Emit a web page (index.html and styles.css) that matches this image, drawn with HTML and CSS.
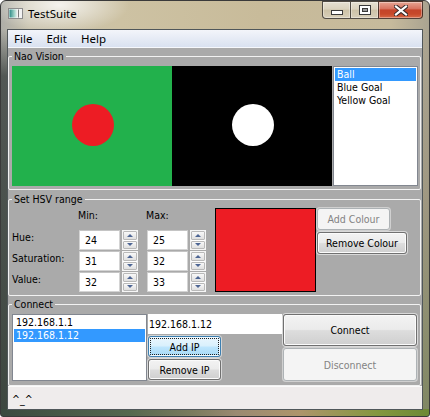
FILE: index.html
```html
<!DOCTYPE html>
<html>
<head>
<meta charset="utf-8">
<title>TestSuite</title>
<link rel="stylesheet" href="styles.css">
</head>
<body>
<div class="window">
  <div class="titlebar">
    <svg class="app-icon" width="15" height="11" viewBox="0 0 15 11">
      <defs>
        <linearGradient id="ig" x1="0" y1="0" x2="1" y2="0">
          <stop offset="0" stop-color="#2d8a86"/>
          <stop offset="0.6" stop-color="#9fd3c8"/>
          <stop offset="1" stop-color="#f4f4f4"/>
        </linearGradient>
      </defs>
      <rect x="0.5" y="0.5" width="14" height="10" fill="#f2f2f2" stroke="#8c8c8c"/>
      <rect x="1.5" y="1.5" width="8" height="8" fill="url(#ig)"/>
      <rect x="10" y="1.5" width="1" height="8" fill="#7a7a7a"/>
    </svg>
    <span class="title">TestSuite</span>
    <div class="caption">
      <div class="cap cap-min">
        <svg class="glyph glyph-min" width="12" height="5" viewBox="0 0 12 5"><rect x="0.5" y="0.5" width="11" height="4" fill="#fff" stroke="#3a3a3a"/></svg>
      </div>
      <div class="cap cap-max">
        <svg class="glyph" width="12" height="10" viewBox="0 0 12 10"><rect x="0.5" y="0.5" width="11" height="9" fill="#fff" stroke="#3a3a3a"/><rect x="3.5" y="3.5" width="5" height="3" fill="#9a9a9a" stroke="#3a3a3a"/></svg>
      </div>
      <div class="cap cap-close">
        <svg class="glyph" width="14" height="11" viewBox="0 0 14 11"><path d="M2 1.5 L12 9.5 M12 1.5 L2 9.5" stroke="#3a2a2a" stroke-width="4.2" stroke-linecap="square"/><path d="M2 1.5 L12 9.5 M12 1.5 L2 9.5" stroke="#fff" stroke-width="2.2" stroke-linecap="square"/></svg>
      </div>
    </div>
  </div>

  <div class="client">
    <div class="menubar">
      <span class="menu-item">File</span>
      <span class="menu-item">Edit</span>
      <span class="menu-item">Help</span>
    </div>

    <div class="main">
      <fieldset class="group group-vision">
        <legend>Nao Vision</legend>
        <div class="vision-row">
          <div class="cam cam-green"><div class="blob blob-red"></div></div>
          <div class="cam cam-black"><div class="blob blob-white"></div></div>
          <ul class="list vision-list">
            <li class="sel">Ball</li>
            <li>Blue Goal</li>
            <li>Yellow Goal</li>
          </ul>
        </div>
      </fieldset>

      <fieldset class="group group-hsv">
        <legend>Set HSV range</legend>
        <div class="hsv">
          <div class="hsv-grid">
            <div></div>
            <div class="col-head">Min:</div>
            <div class="col-head">Max:</div>

            <div class="row-label">Hue:</div>
            <div class="spin"><div class="spin-field">24</div><div class="spin-btns"><div class="spin-btn up"></div><div class="spin-btn down"></div></div></div>
            <div class="spin"><div class="spin-field">25</div><div class="spin-btns"><div class="spin-btn up"></div><div class="spin-btn down"></div></div></div>

            <div class="row-label">Saturation:</div>
            <div class="spin"><div class="spin-field">31</div><div class="spin-btns"><div class="spin-btn up"></div><div class="spin-btn down"></div></div></div>
            <div class="spin"><div class="spin-field">32</div><div class="spin-btns"><div class="spin-btn up"></div><div class="spin-btn down"></div></div></div>

            <div class="row-label">Value:</div>
            <div class="spin"><div class="spin-field">32</div><div class="spin-btns"><div class="spin-btn up"></div><div class="spin-btn down"></div></div></div>
            <div class="spin"><div class="spin-field">33</div><div class="spin-btns"><div class="spin-btn up"></div><div class="spin-btn down"></div></div></div>
          </div>
          <div class="swatch"></div>
          <div class="colour-btns">
            <div class="btn disabled btn-add-colour">Add Colour</div>
            <div class="btn btn-remove-colour">Remove Colour</div>
          </div>
        </div>
      </fieldset>

      <fieldset class="group group-connect">
        <legend>Connect</legend>
        <div class="connect">
          <ul class="list ip-list">
            <li>192.168.1.1</li>
            <li class="sel">192.168.1.12</li>
          </ul>
          <div class="ip-mid">
            <div class="ip-field">192.168.1.12</div>
            <div class="btn focus btn-ip">Add IP</div>
            <div class="btn btn-ip">Remove IP</div>
          </div>
          <div class="ip-right">
            <div class="btn btn-connect">Connect</div>
            <div class="btn disabled btn-disconnect">Disconnect</div>
          </div>
        </div>
      </fieldset>
    </div>

    <div class="status">^_^</div>
  </div>
</div>
</body>
</html>
```

FILE: styles.css
```css
* { box-sizing: border-box; }

html, body {
  margin: 0;
  padding: 0;
  background: #ffffff;
}

body {
  width: 430px;
  height: 417px;
  overflow: hidden;
  font-family: "DejaVu Sans Condensed", "DejaVu Sans", sans-serif;
  font-stretch: condensed;
  font-size: 10.5px;
  color: #000;
}

.window {
  width: 430px;
  height: 417px;
  border: 1px solid #3a3a3a;
  border-radius: 6px 6px 3px 3px;
  overflow: hidden;
  display: flex;
  flex-direction: column;
  background:
    linear-gradient(to right, #3b4a3f 0, #55684f 30%, #7c7b5e 45%, #9b8a72 55%, #ad956b 70%, #84973f 88%, #6c8935 100%) left bottom / 100% 7px no-repeat,
    linear-gradient(to bottom, rgba(180,180,178,0) 28px, rgba(72,78,76,0.9) 75px, rgba(55,65,58,0.95) 417px) left top / 7px 100% no-repeat,
    linear-gradient(to bottom, rgba(0,0,0,0) 28px, rgba(120,110,80,0.25) 200px, rgba(90,110,60,0.55) 417px) right top / 7px 100% no-repeat,
    radial-gradient(70px 28px at 58px 4px, rgba(255,255,255,0.8), rgba(255,255,255,0)),
    linear-gradient(to right, #aeaea8 0, #c9c3ae 28px, #cdc2a3 120px, #c8bb9a 260px, #c6ba9c 390px, #a8a290 430px);
}

/* ---------- title bar ---------- */
.titlebar {
  height: 28px;
  flex: none;
  display: flex;
  align-items: flex-start;
  padding: 0 6px 0 7px;
}

.app-icon {
  margin-top: 7px;
  flex: none;
}

.title {
  margin: 5px 0 0 5px;
  font-family: "Noto Sans", "Open Sans", sans-serif;
  font-stretch: normal;
  font-size: 11.5px;
  line-height: 16px;
  color: #000;
}

.caption {
  margin-left: auto;
  display: flex;
  height: 18px;
}

.cap {
  height: 18px;
  border: 1px solid rgba(45, 40, 35, 0.8);
  display: flex;
  align-items: center;
  justify-content: center;
  box-shadow: inset 0 0 0 1px rgba(255, 255, 255, 0.35);
}

.cap-min {
  width: 28px;
  border-right: none;
  border-radius: 0 0 0 4px;
  background: linear-gradient(rgba(255,255,255,0.55) 0%, rgba(255,255,255,0.35) 45%, rgba(255,255,255,0.12) 50%, rgba(255,255,255,0.3) 100%);
}

.cap-max {
  width: 28px;
  border-right: none;
  background: linear-gradient(rgba(255,255,255,0.55) 0%, rgba(255,255,255,0.35) 45%, rgba(255,255,255,0.12) 50%, rgba(255,255,255,0.3) 100%);
}

.cap-close {
  width: 45px;
  border-radius: 0 0 4px 0;
  background: linear-gradient(#e6a594 0%, #d77360 42%, #c4442a 50%, #c7482a 75%, #d86a48 100%);
}

.glyph-min { margin-top: 4px; }

/* ---------- client ---------- */
.client {
  margin: 0 6px;
  height: 381px;
  flex: none;
  border: 1px solid #50575a;
  background: #aaaaaa;
  display: flex;
  flex-direction: column;
}

.menubar {
  height: 18px;
  flex: none;
  border-bottom: 1px solid #f6f8fc;
  background: linear-gradient(#f3f5fa 0%, #e6ebf5 50%, #d9e1f0 100%);
  display: flex;
  gap: 14px;
  padding-left: 6px;
  font-family: "Noto Sans", "Open Sans", sans-serif;
  font-stretch: normal;
  font-size: 11.5px;
  line-height: 17px;
}

.main {
  flex: 1;
  display: flex;
  flex-direction: column;
}

.status {
  height: 23px;
  flex: none;
  border-top: 1px solid #fbfbfb;
  background: #efecec;
  padding: 2px 0 0 4px;
  line-height: 20px;
}

/* ---------- group boxes ---------- */
.group {
  margin: 0 1px 0 0;
  min-width: 0;
  border: 1px solid #f2f2f2;
  border-radius: 2px;
  padding: 3px 2px 3px 3px;
}

.group legend {
  padding: 0 2px;
  margin-left: 0;
  line-height: 13px;
}

.group-vision { margin-top: 2px; }
.group-hsv { margin-top: 3px; padding-top: 0; }
.group-connect { margin-top: 2px; padding-bottom: 4px; }

/* ---------- vision ---------- */
.vision-row {
  display: flex;
  height: 120px;
}

.cam {
  width: 160px;
  height: 120px;
  flex: none;
  display: flex;
  align-items: center;
  justify-content: center;
}

.cam-green { background: #22b14c; }
.cam-black { background: #000000; }

.blob {
  width: 42px;
  height: 42px;
  border-radius: 50%;
  margin: 0 0 3px 2px;
}

.blob-red { background: #ed1c24; }
.blob-white { background: #ffffff; }

.list {
  list-style: none;
  margin: 0;
  padding: 1px;
  background: #ffffff;
  border: 1px solid #828790;
}

.list li {
  height: 13px;
  line-height: 13px;
  padding-left: 2px;
  white-space: nowrap;
}

.list li.sel {
  background: #3399ff;
  color: #ffffff;
}

.vision-list {
  width: 85px;
  margin-left: 1px;
}

/* ---------- HSV ---------- */
.hsv {
  display: flex;
  align-items: flex-start;
}

.hsv-grid {
  display: grid;
  grid-template-columns: 67px 68px 59px;
  grid-template-rows: 23px 20px 20px 20px;
  row-gap: 1px;
}

.col-head {
  padding-top: 3px;
  line-height: 13px;
  margin-left: -1px;
}

.row-label {
  padding-top: 1px;
  line-height: 13px;
  white-space: nowrap;
}

.spin {
  display: flex;
  width: 59px;
  height: 20px;
}

.spin-field {
  width: 41px;
  height: 20px;
  background: #ffffff;
  border: 1px solid #d4d4d4;
  border-top-color: #c4c4c4;
  padding-left: 5px;
  line-height: 18px;
}

.spin-btns {
  margin-left: 2px;
  width: 16px;
  height: 20px;
  border: 1px solid #f6f6f6;
  background: #ffffff;
  display: flex;
  flex-direction: column;
  gap: 1px;
}

.spin-btn {
  flex: 1;
  border: 1px solid #b9b9b9;
  border-radius: 1px;
  background: linear-gradient(#f8f8f8, #e0e0e0);
  display: flex;
  align-items: center;
  justify-content: center;
}

.spin-btn::before {
  content: "";
  width: 0;
  height: 0;
  border-left: 3px solid transparent;
  border-right: 3px solid transparent;
}

.spin-btn.up::before { border-bottom: 3px solid #4d6593; }
.spin-btn.down::before { border-top: 3px solid #4d6593; }

.swatch {
  width: 101px;
  height: 84px;
  margin: 2px 0 0 9px;
  background: #ed1c24;
  border: 1px solid #000000;
  flex: none;
}

.colour-btns {
  margin: 2px 0 0 1px;
  display: flex;
  flex-direction: column;
  align-items: flex-start;
  gap: 2px;
}

.btn-add-colour { width: 73px; height: 22px; }
.btn-remove-colour { width: 90px; height: 22px; }

/* ---------- buttons ---------- */
.btn {
  display: flex;
  align-items: center;
  justify-content: center;
  border: 1px solid #707070;
  border-radius: 3px;
  background: linear-gradient(#f3f3f3 0%, #ebebeb 48%, #dddddd 52%, #cfcfcf 100%);
  box-shadow: inset 0 0 0 1px #fbfbfb, 0 0 0 1px rgba(255, 255, 255, 0.55);
  color: #000;
  white-space: nowrap;
  flex: none;
}

.btn.disabled {
  border-color: #adb2b5;
  background: #f4f4f4;
  box-shadow: 0 0 0 1px rgba(255, 255, 255, 0.45);
  color: #838383;
}

.btn.focus {
  border-color: #3c7fb1;
  background: linear-gradient(#eaf6fd 0%, #d9f0fc 48%, #bee6fd 52%, #a7d9f5 100%);
  box-shadow: inset 0 0 0 1px #f2faff, 0 0 0 1px rgba(255, 255, 255, 0.5);
  outline: 1px dotted #202020;
  outline-offset: -3px;
}

/* ---------- connect ---------- */
.connect {
  display: flex;
  height: 67px;
}

.ip-list {
  width: 135px;
  flex: none;
}

.ip-mid {
  width: 134px;
  margin-left: 1px;
  display: flex;
  flex-direction: column;
  gap: 2px;
}

.ip-field {
  height: 20px;
  background: #ffffff;
  padding-left: 1px;
  line-height: 20px;
}

.btn-ip {
  width: 73px;
  height: 21px;
}

.ip-right {
  width: 134px;
  margin-left: 1px;
  display: flex;
  flex-direction: column;
  gap: 2px;
}

.btn-connect { height: 32px; }
.btn-disconnect { height: 33px; }
```
